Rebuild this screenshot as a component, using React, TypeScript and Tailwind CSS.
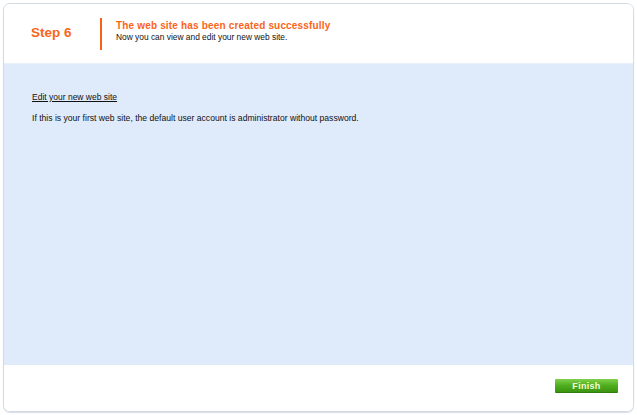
import React from "react";

export default function App() {
  return (
    <div className="w-[637px] h-[415px] bg-white p-[3px]" style={{ fontFamily: '"Liberation Sans", Arial, sans-serif' }}>
      <div className="w-[631px] h-[409px] border border-[#d3dbe4] rounded-[7px] flex flex-col overflow-hidden shadow-[0_1px_1px_rgba(180,190,200,0.5)]">
        <div className="h-[59px] flex items-center bg-white shrink-0">
          <div className="w-[96px] pl-[27px] text-[13.5px] font-bold text-[#fa6419]">Step 6</div>
          <div className="w-[2px] h-[32px] bg-[#f7621a] mt-[1px]"></div>
          <div className="pl-[14px] -mt-[5px]">
            <div className="text-[10px] font-bold text-[#fa6419] leading-[13px] tracking-[0.17px]">The web site has been created successfully</div>
            <div className="text-[8.4px] text-[#111] leading-[11px]">Now you can view and edit your new web site.</div>
          </div>
        </div>
        <div className="flex-1 bg-[#dfeafb] border-t border-[#e8f0fc] pl-[28px] pt-[28px]">
          <a href="#" className="text-[8.5px] text-[#111] underline block leading-[11px]">Edit your new web site</a>
          <div className="text-[8.6px] text-[#111] leading-[11px] mt-[10px]">If this is your first web site, the default user account is administrator without password.</div>
        </div>
        <div className="h-[46px] bg-white flex items-start justify-end pr-[15px] pt-[14px] shrink-0">
          <button className="w-[63px] h-[14px] rounded-[1px] bg-gradient-to-b from-[#7fd14a] via-[#4eae1e] to-[#3c9410] text-[9px] font-bold text-[#f4ffd8] leading-[14px] tracking-[0.3px] border-b border-[#2f7d0b]">Finish</button>
        </div>
      </div>
    </div>
  );
}
